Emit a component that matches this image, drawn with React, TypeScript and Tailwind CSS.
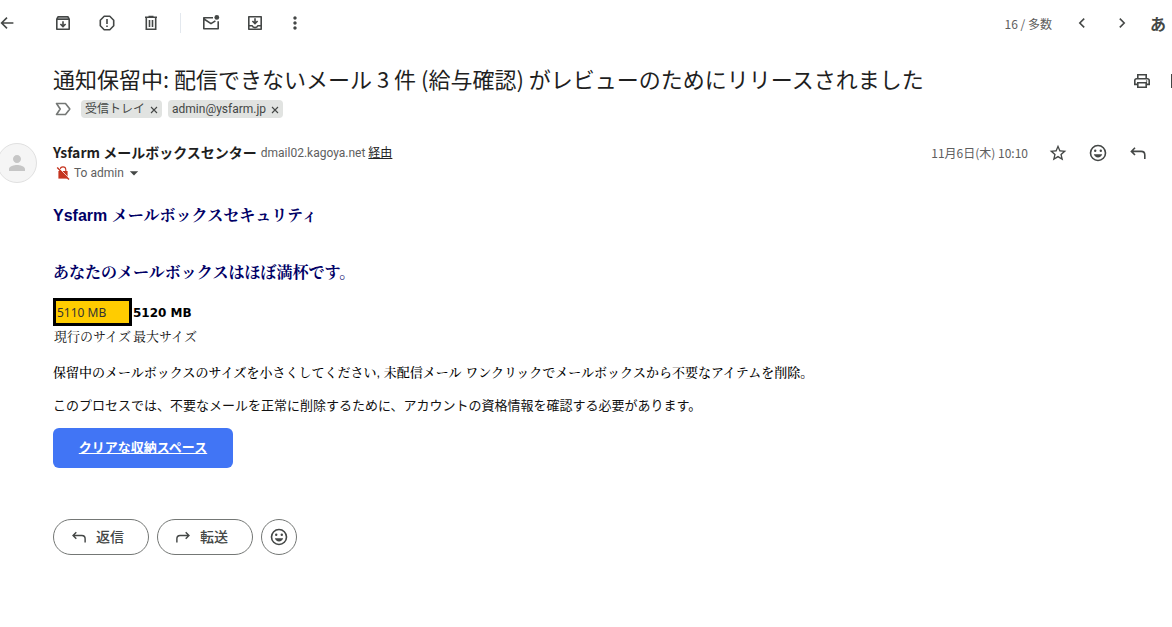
import React from 'react';
import { MdArrowDropDown, MdMoreVert, MdPerson, MdStarOutline } from 'react-icons/md';

type IconProps = { className?: string };

const Svg = ({ className = 'size-5', children }: IconProps & { children: React.ReactNode }) => (
  <svg viewBox="0 0 20 20" fill="none" stroke="currentColor" strokeWidth="1.6" className={`${className} block shrink-0`} aria-hidden="true">
    {children}
  </svg>
);

const BackIcon = () => (
  <Svg>
    <path d="M16.4 10H4.6M10 4.6 4.6 10l5.4 5.4" />
  </Svg>
);

const ArchiveIcon = () => (
  <Svg>
    <path d="M3.8 6.2v10h12.4v-10M3.8 6.2 5 3.8h10l1.2 2.4z" strokeLinejoin="round" />
    <path d="M4 6 5 4h10l1 2z" fill="currentColor" fillOpacity="0.4" stroke="none" />
    <path d="M10 8.3v5M7.4 11l2.6 2.6 2.6-2.6" />
  </Svg>
);

const SpamIcon = () => (
  <Svg>
    <path d="M7.2 3.3h5.6l3.9 3.9v5.6l-3.9 3.9H7.2l-3.9-3.9V7.2z" strokeLinejoin="round" />
    <path d="M10 6v5M10 12.4V14" />
  </Svg>
);

const DeleteIcon = () => (
  <Svg>
    <path d="M5.3 5v11.2h9.4V5M4 4.3h12M7.5 3.6h5M8.5 7v7M11.5 7v7" />
  </Svg>
);

const UnreadIcon = () => (
  <Svg>
    <path d="M12 4.8H2.8v10.9h14.4V8.3M3 6l7 4.6 4.4-2.8" strokeLinejoin="round" />
    <circle cx="15.8" cy="4.4" r="2.4" fill="currentColor" stroke="none" />
  </Svg>
);

const MoveIcon = () => (
  <Svg>
    <path d="M3.8 3.8h12.4v12.4H3.8zM4 12.7h3.2c.4 1 1.5 1.8 2.8 1.8s2.4-.8 2.8-1.8H16" strokeLinejoin="round" />
    <path d="M10 5.3v5M7.4 8l2.6 2.6L12.6 8" />
  </Svg>
);

const PrevIcon = () => (
  <Svg>
    <path d="m12.2 5.6-4.4 4.4 4.4 4.4" />
  </Svg>
);

const NextIcon = () => (
  <Svg>
    <path d="m7.8 5.6 4.4 4.4-4.4 4.4" />
  </Svg>
);

const PrintIcon = () => (
  <Svg>
    <path d="M5.8 13.4h-3V9.6c0-1 .7-1.8 1.8-1.8h10.8c1.1 0 1.8.8 1.8 1.8v3.8h-3M5.8 7.5V3.8h8.4v3.7M5.8 11.7h8.4v4.5H5.8z" />
    <circle cx="14.6" cy="10" r=".8" fill="currentColor" stroke="none" />
  </Svg>
);

const OpenIcon = () => (
  <Svg>
    <path d="M10 3.8H3.8v12.4h12.4V10M11.5 3.8h4.7v4.7M16 4l-8 8" />
  </Svg>
);

const ReplyIcon = ({ className }: IconProps) => (
  <Svg className={className}>
    <path d="M7 4.8 3.4 8.4 7 12M3.6 8.4h9.6c2.1 0 3.6 1.5 3.6 3.6v4.1" />
  </Svg>
);

const ForwardIcon = ({ className }: IconProps) => (
  <Svg className={className}>
    <path d="m13 4.8 3.6 3.6-3.6 3.6M16.4 8.4H6.8c-2.1 0-3.6 1.5-3.6 3.6v4.1" />
  </Svg>
);

const SmileIcon = () => (
  <Svg>
    <circle cx="10" cy="10" r="7.5" />
    <circle cx="7.2" cy="7.8" r="1.2" fill="currentColor" stroke="none" />
    <circle cx="12.8" cy="7.8" r="1.2" fill="currentColor" stroke="none" />
    <path d="M5.8 11.2h8.4c-.6 2-2.2 3.2-4.2 3.2s-3.6-1.2-4.2-3.2z" fill="currentColor" stroke="none" />
  </Svg>
);

const LabelIcon = () => (
  <svg viewBox="0 0 16 14" fill="none" stroke="#747775" strokeWidth="1.6" className="h-3.5 w-4 shrink-0" aria-hidden="true">
    <path d="M1.5 1.5h9L14.8 7l-4.3 5.5h-9L5.2 7z" strokeLinejoin="round" />
  </svg>
);

const NoEncryptionIcon = () => (
  <svg viewBox="0 0 14 14" className="size-3.5 shrink-0" aria-hidden="true">
    <path d="M4.2 5V3.7a2.8 2.8 0 0 1 5.6 0V5" fill="none" stroke="#c5341f" strokeWidth="1.1" />
    <path d="M2.4 5h9.2v7.6H2.4z" fill="#c5341f" />
    <path d="m2.2 1 11.2 11.8" stroke="#fff" strokeWidth="1" />
    <path d="m1.2 1.4 11.8 12" stroke="#c5341f" strokeWidth="1.4" />
  </svg>
);

const IconButton = ({ label, children }: { label: string; children: React.ReactNode }) => (
  <button type="button" aria-label={label} className="flex size-5 shrink-0 items-center justify-center">
    {children}
  </button>
);

const Chip = ({ name }: { name: string }) => (
  <span className="flex h-[18px] items-center gap-[5px] rounded bg-[#e1e3e1] px-1 text-xs leading-[18px] text-[#444746]">
    {name}
    <button type="button" aria-label={`${name} を削除`} className="flex w-2 items-center justify-center pt-0.5">
      <svg viewBox="0 0 8 8" stroke="currentColor" strokeWidth="1.1" className="size-2" aria-hidden="true">
        <path d="m1 1 6 6M7 1 1 7" />
      </svg>
    </button>
  </span>
);

const Toolbar = () => (
  <header className="flex h-[46px] items-center justify-between overflow-hidden text-[#444746]">
    <div className="-ml-[3px] flex items-center gap-6">
      <IconButton label="戻る"><BackIcon /></IconButton>
      <div className="ml-3 flex items-center gap-6">
        <IconButton label="アーカイブ"><ArchiveIcon /></IconButton>
        <IconButton label="迷惑メールを報告"><SpamIcon /></IconButton>
        <IconButton label="削除"><DeleteIcon /></IconButton>
      </div>
      <div className="-ml-[5px] h-5 w-px bg-[#e3e8ee]" />
      <div className="-ml-1 flex items-center gap-6">
        <IconButton label="未読にする"><UnreadIcon /></IconButton>
        <IconButton label="移動"><MoveIcon /></IconButton>
        <div className="-ml-1"><IconButton label="その他"><MdMoreVert className="size-5" /></IconButton></div>
      </div>
    </div>
    <div className="flex items-center gap-5 pr-1 font-['Noto_Sans_CJK_JP',sans-serif]">
      <span className="pt-0.5 text-xs text-[#5e5e5e]">16 / 多数</span>
      <IconButton label="前へ"><PrevIcon /></IconButton>
      <IconButton label="次へ"><NextIcon /></IconButton>
      <button type="button" aria-label="入力ツール" className="-ml-1 w-5 text-base leading-5 font-bold">あ</button>
    </div>
  </header>
);

const Subject = () => (
  <section className="flex items-start justify-between overflow-hidden pt-[18px] pl-[53px]">
    <div>
      <h1 className="font-['Noto_Sans_CJK_JP',sans-serif] text-[22px] leading-7 text-[#1f1f1f]">
        通知保留中: 配信できないメール 3 件 (給与確認) がレビューのためにリリースされました
      </h1>
      <div className="mt-2 flex items-center gap-1.5 pl-0.5">
        <LabelIcon />
        <div className="ml-1 flex gap-1.5">
          <Chip name="受信トレイ" />
          <Chip name="admin@ysfarm.jp" />
        </div>
      </div>
    </div>
    <div className="-mr-4 flex gap-4 pt-[7px] text-[#444746]">
      <IconButton label="印刷"><PrintIcon /></IconButton>
      <IconButton label="新しいウィンドウ"><OpenIcon /></IconButton>
    </div>
  </section>
);

const SenderRow = () => (
  <section className="mt-[25px] flex items-start">
    <div className="-ml-[3px] flex size-10 shrink-0 items-center justify-center rounded-full border border-[#e0e0e0] bg-[#f5f5f5]">
      <MdPerson className="size-6 text-[#c6c6c6]" />
    </div>
    <div className="ml-4 grow">
      <div className="flex items-center gap-1 leading-5">
        <h2 className="pb-0.5 font-['Noto_Sans_CJK_JP',sans-serif] text-sm leading-[18px] font-bold text-[#1f1f1f]">
          Ysfarm メールボックスセンター
        </h2>
        <span className="text-xs leading-5 text-[#5e5e5e]">
          dmail02.kagoya.net <a href="#via" className="text-[#222] underline">経由</a>
        </span>
      </div>
      <div className="flex items-center gap-1 pl-[3px] text-xs leading-5 text-[#5e5e5e]">
        <NoEncryptionIcon />
        <span>To admin</span>
        <button type="button" aria-label="詳細を表示" className="-ml-1">
          <MdArrowDropDown className="size-5 text-[#444746]" />
        </button>
      </div>
    </div>
    <div className="flex items-center gap-5 pr-6 text-[#444746]">
      <time className="font-['Noto_Sans_CJK_JP',sans-serif] text-xs leading-5 text-[#5e5e5e]">11月6日(木) 10:10</time>
      <IconButton label="スター"><MdStarOutline className="size-5" /></IconButton>
      <IconButton label="リアクション"><SmileIcon /></IconButton>
      <IconButton label="返信"><ReplyIcon /></IconButton>
    </div>
  </section>
);

const MessageBody = () => (
  <article className="pt-[21px] pl-[53px] font-['Liberation_Sans','Noto_Serif_CJK_JP','Noto_Sans_CJK_JP',sans-serif] text-[13px] leading-5 text-[#111]">
    <h3 className="text-base leading-6 font-bold text-[#000066]">Ysfarm メールボックスセキュリティ</h3>
    <h3 className="mt-[33px] text-base leading-6 font-bold text-[#000066]">あなたのメールボックスはほぼ満杯です。</h3>
    <table className="mt-[13px] border-separate border-spacing-0">
      <tbody>
        <tr>
          <td className="h-7 border-3 border-black bg-[#ffcc00] px-px pt-px pb-0 font-['Noto_Sans',sans-serif] text-xs text-[#333]">5110 MB</td>
          <td className="px-px pt-px pb-0 font-['DejaVu_Sans',sans-serif] text-xs font-bold text-black">5120 MB</td>
        </tr>
        <tr>
          <td className="px-px pt-px pb-0">現行のサイズ</td>
          <td className="px-px pt-px pb-0">最大サイズ</td>
        </tr>
      </tbody>
    </table>
    <p className="mt-4 font-medium text-black">
      保留中のメールボックスのサイズを小さくしてください, 未配信メール ワンクリックでメールボックスから不要なアイテムを削除。
    </p>
    <p className="mt-3 font-['Noto_Sans_CJK_JP',sans-serif]">
      このプロセスでは、不要なメールを正常に削除するために、アカウントの資格情報を確認する必要があります。
    </p>
    <a href="#" className="mt-[13px] flex h-10 w-[180px] items-center justify-center rounded-md bg-[#4175f5] pb-0.5 font-['Noto_Sans_CJK_JP',sans-serif] font-bold text-white underline">
      クリアな収納スペース
    </a>
  </article>
);

const pill = 'flex h-9 items-center rounded-full border border-[#747775] text-sm font-medium text-[#444746]';

const ReplyActions = () => (
  <footer className="mt-[51px] flex gap-2 pl-[53px]">
    <button type="button" className={`${pill} w-24 gap-2 pl-4`}>
      <ReplyIcon className="size-[18px]" />
      返信
    </button>
    <button type="button" className={`${pill} w-24 gap-2 pl-4`}>
      <ForwardIcon className="size-[18px]" />
      転送
    </button>
    <button type="button" aria-label="リアクションを追加" className={`${pill} w-9 justify-center`}>
      <SmileIcon />
    </button>
  </footer>
);

const App = () => {
  return (
    <main className="min-h-screen overflow-hidden bg-white font-['Roboto','Noto_Sans_CJK_JP',sans-serif]">
      <Toolbar />
      <Subject />
      <SenderRow />
      <MessageBody />
      <ReplyActions />
    </main>
  );
};

export default App;
